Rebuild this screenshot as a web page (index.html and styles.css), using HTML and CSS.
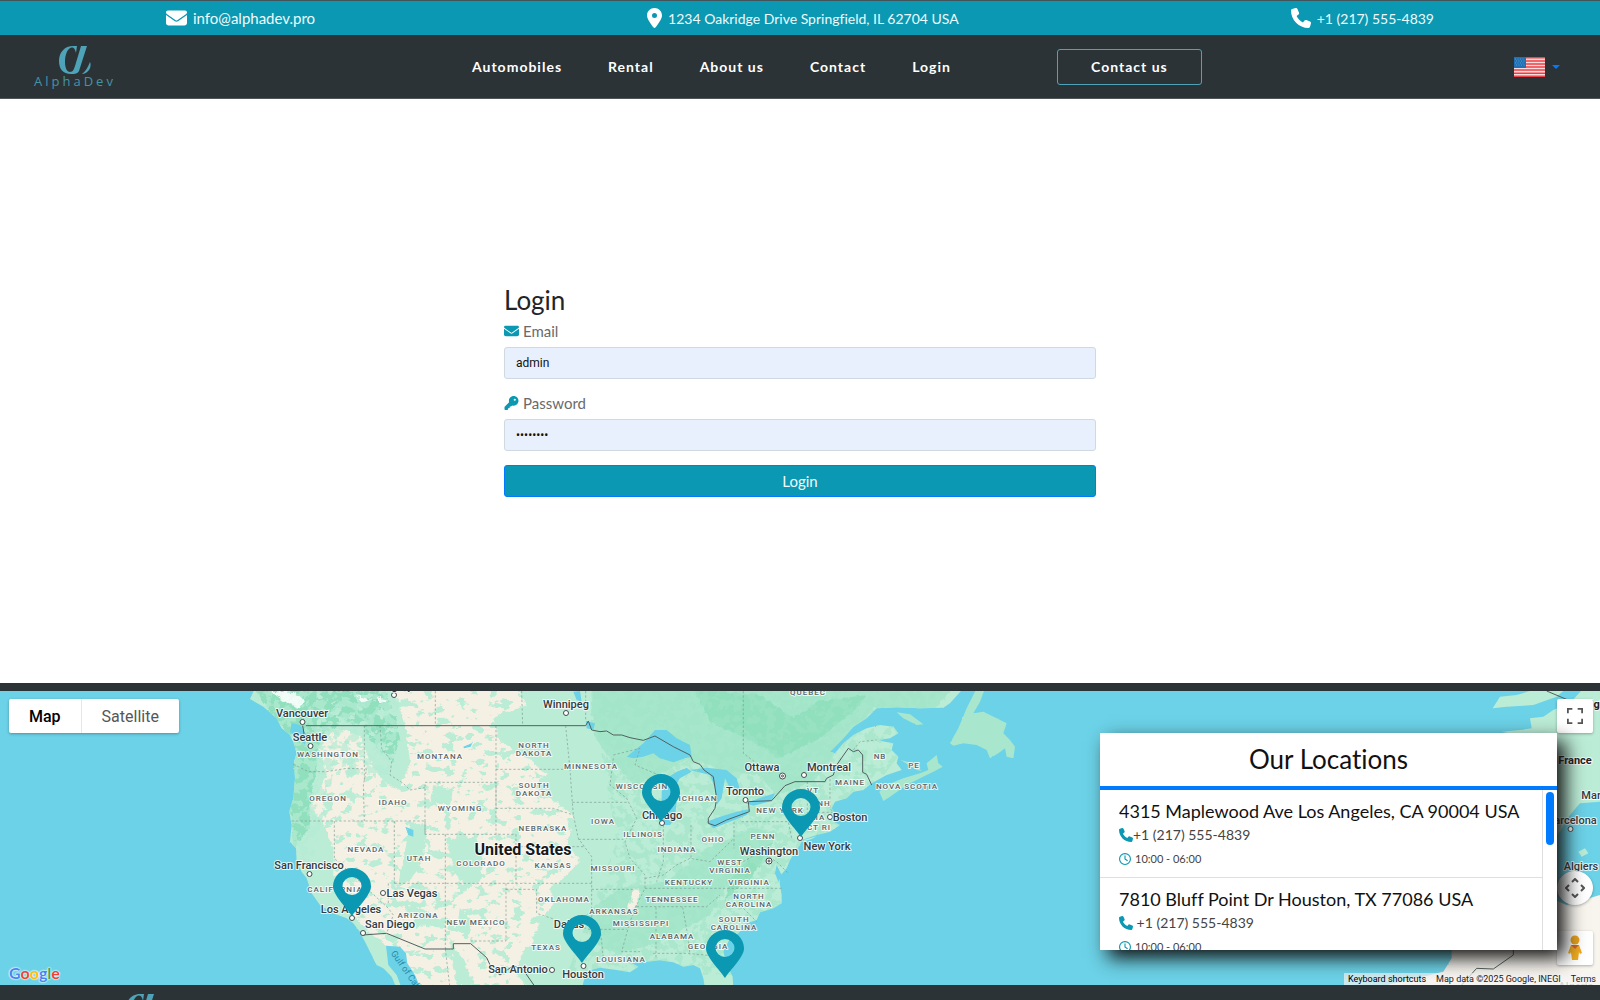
FILE: index.html
```html
<!DOCTYPE html>
<html lang="en">
<head>
  <meta charset="UTF-8">
  <meta name="viewport" content="width=device-width, initial-scale=1">
  <title>AlphaDev - Login</title>
  <link rel="stylesheet" href="styles.css">
</head>
<body>

  <!-- shared icons -->
  <svg class="defs" aria-hidden="true">
    <symbol id="i-mail" viewBox="0 0 512 512" preserveAspectRatio="none"><path d="M48 64C21.500 64 0 85.500 0 112c0 15.100 7.100 29.300 19.200 38.400L236.800 313.600c11.400 8.500 27 8.500 38.400 0L492.800 150.400c12.100-9.100 19.200-23.300 19.200-38.400c0-26.500-21.500-48-48-48H48zM0 176V384c0 35.300 28.700 64 64 64H448c35.300 0 64-28.700 64-64V176L294.400 339.200c-22.800 17.100-54 17.100-76.800 0L0 176z"/></symbol>
    <symbol id="i-phone" viewBox="0 0 512 512"><path d="M164.900 24.600c-7.700-18.600-28-28.500-47.400-23.200l-88 24C12.100 30.200 0 46 0 64C0 311.400 200.600 512 448 512c18 0 33.800-12.100 38.600-29.500l24-88c5.300-19.400-4.600-39.700-23.200-47.400l-96-40c-16.300-6.800-35.200-2.100-46.300 11.600L304.700 368C234.300 334.700 177.300 277.700 144 207.300L193.300 167c13.700-11.200 18.400-30 11.600-46.300l-40-96z"/></symbol>
    <symbol id="i-pin" viewBox="0 0 384 512"><path d="M215.700 499.200C267 435 384 279.400 384 192C384 86 298 0 192 0S0 86 0 192c0 87.400 117 243 168.300 307.200c12.300 15.300 35.100 15.300 47.400 0zM192 128a64 64 0 1 1 0 128 64 64 0 1 1 0-128z"/></symbol>
    <symbol id="i-key" viewBox="0 0 512 512"><path d="M336 352c97.200 0 176-78.800 176-176S433.200 0 336 0S160 78.800 160 176c0 18.700 2.900 36.800 8.300 53.700L7 391c-4.500 4.500-7 10.600-7 17v80c0 13.300 10.700 24 24 24h80c13.300 0 24-10.700 24-24V448h40c13.300 0 24-10.700 24-24V384h40c6.400 0 12.500-2.500 17-7l33.300-33.300c16.900 5.400 35 8.300 53.700 8.300zM376 96a40 40 0 1 1 0 80 40 40 0 1 1 0-80z"/></symbol>
    <symbol id="i-clock" viewBox="0 0 512 512"><path d="M464 256A208 208 0 1 1 48 256a208 208 0 1 1 416 0zM0 256a256 256 0 1 0 512 0A256 256 0 1 0 0 256zM232 120V256c0 8 4 15.500 10.700 20l96 64c11 7.400 25.900 4.400 33.300-6.700s4.400-25.900-6.700-33.300L280 243.200V120c0-13.300-10.700-24-24-24s-24 10.700-24 24z"/></symbol>
    <symbol id="i-alpha" viewBox="0 0 32 28"><path d="M18 0H28L20 25C19 27.500 16 28 12 28C4 28 0 23 0 15C0 6 6 0 14 0H18L17 7C16 3 15 1.500 13 1.500C9 1.500 6 8 6 16C6 22 8 26 11 26C14 26 15 23 16 20L22 0Z"/><path d="M31 16C33 20 30 28 23 28C27 25 29 21 31 16Z"/></symbol>
  </svg>

  <header>
    <div class="topbar">
      <a href="mailto:info@alphadev.pro"><svg class="mail"><use href="#i-mail"/></svg>info@alphadev.pro</a>
      <span><svg class="pin"><use href="#i-pin"/></svg>1234 Oakridge Drive Springfield, IL 62704 USA</span>
      <a href="tel:+12175554839"><svg class="phone"><use href="#i-phone"/></svg>+1 (217) 555-4839</a>
    </div>

    <div class="navbar">
      <a class="logo" href="#" aria-label="AlphaDev">
        <svg><use href="#i-alpha"/></svg>
        <span>AlphaDev</span>
      </a>
      <nav>
        <a href="#">Automobiles</a>
        <a href="#">Rental</a>
        <a href="#">About us</a>
        <a href="#">Contact</a>
        <a href="#">Login</a>
        <button type="button" class="contact-btn">Contact us</button>
      </nav>
      <button type="button" class="lang" aria-label="Language">
        <svg class="flag" viewBox="0 0 31 20">
          <path fill="#f6dcdc" d="M0 0h31v20H0z"/>
          <path stroke="#ee4045" stroke-width="1.540" d="M0 .8h31M0 3.900h31M0 7h31M0 10h31M0 13.100h31M0 16.200h31M0 19.200h31"/>
          <path fill="#1f70b5" d="M0 0h12v11H0z"/>
          <path stroke="#6aa5d2" stroke-dasharray="1 1.500" stroke-width=".8" d="M1 2h10M2 4h9M1 6h10M2 8h9"/>
        </svg>
        <svg class="caret" viewBox="0 0 8 4"><path d="M0 0h8L4 4z"/></svg>
      </button>
    </div>
  </header>

  <main>
    <form class="login">
      <h1>Login</h1>
      <label for="email"><svg class="small-mail"><use href="#i-mail"/></svg>Email</label>
      <input type="text" id="email" value="admin">
      <label for="password"><svg><use href="#i-key"/></svg>Password</label>
      <input type="password" id="password" value="password">
      <button type="submit">Login</button>
    </form>
  </main>

  <section class="map">
    <svg class="map-canvas" viewBox="0 0 1600 294" preserveAspectRatio="xMidYMid slice">
      <defs>
        <filter id="rough" x="0" y="0" width="100%" height="100%">
          <feTurbulence type="fractalNoise" baseFrequency=".06" numOctaves="3" seed="4"/>
          <feDisplacementMap in="SourceGraphic" scale="16" xChannelSelector="R" yChannelSelector="G"/>
        </filter>
        <filter id="coast" x="0" y="0" width="100%" height="100%">
          <feTurbulence type="fractalNoise" baseFrequency=".12" numOctaves="2" seed="8"/>
          <feDisplacementMap in="SourceGraphic" scale="5" xChannelSelector="R" yChannelSelector="G"/>
        </filter>
        <filter id="patches" x="0" y="0" width="100%" height="100%">
          <feTurbulence type="fractalNoise" baseFrequency=".03 .04" numOctaves="4" seed="11"/>
          <feColorMatrix values="0 0 0 0 0  0 0 0 0 0  0 0 0 0 0  16 0 0 0 -9.200"/>
          <feComposite in="SourceGraphic" operator="in"/>
        </filter>
        <filter id="patches2" x="0" y="0" width="100%" height="100%">
          <feTurbulence type="fractalNoise" baseFrequency=".04" numOctaves="4" seed="31"/>
          <feColorMatrix values="0 0 0 0 0  0 0 0 0 0  0 0 0 0 0  0 14 0 0 -6.800"/>
          <feComposite in="SourceGraphic" operator="in"/>
        </filter>
        <clipPath id="land-clip"><use href="#america"/></clipPath>
        <path id="america" d="M765 40L750 72 790 95 830 130 845 160 870 180 880 200 890 235 882 260 885 310 880 370 868 410 875 450 870 500 888 520 890 560 905 590 920 610 935 655 960 690 1000 715 1040 730 1060 745 1080 770 1095 800 1110 830 1130 870 1150 880 1175 905 1190 940H1745L1755 905 1770 885 1800 878 1850 885 1890 892 1915 875 1890 862 1940 860 1980 856 2020 862 2050 875 2080 870 2100 880 2110 910 2115 940H2200L2198 905 2180 870 2170 830 2190 790 2215 775 2240 745 2270 735 2280 712 2320 700 2345 685V660L2340 630 2338 605 2360 580 2370 555 2385 530 2400 510 2405 495 2450 480 2490 470 2520 450 2500 440 2510 425 2495 400 2505 380 2540 370 2560 350 2590 345 2615 325 2660 300 2705 285 2690 265 2695 245 2675 225 2680 205 2655 200 2635 195 2670 190 2695 175 2680 155 2640 150 2600 160 2560 180 2530 205 2505 235 2490 230 2530 190 2560 155 2600 130 2630 100 2690 97 2760 100 2830 98 2850 85 2890 40Z"/>
        <symbol id="marker" viewBox="0 0 38 48" width="38" height="48"><path fill="#0b98b2" fill-rule="evenodd" d="M19 48C14 40 0 27 0 18.500A19 18.500 0 0 1 38 18.500C38 27 24 40 19 48ZM19 9A9.500 9 0 0 0 19 27A9.500 9 0 0 0 19 9Z"/></symbol>
      </defs>

      <rect class="water" width="1600" height="294"/>

      <g transform="translate(0 -16) scale(.33333)">
        <g filter="url(#coast)">
          <use href="#america" fill="#bbecd6"/>
          <path fill="#a8e7cd" d="M2638 350L2660 330 2710 310 2760 295 2785 285 2780 265 2810 240 2815 265 2828 275 2800 290 2760 310 2720 330 2670 365 2650 378ZM2702 255L2750 285 2765 288 2740 265ZM2850 205L2875 160 2900 100 2930 40H2955L2940 80 2920 115 2950 110 2990 130 3020 145 3010 175 3030 195 3045 215 3040 250 3020 245 3015 220 2995 235 2970 250 2960 225 2930 210 2890 205 2860 212ZM2690 112L2730 118 2770 148 2750 150 2710 130Z"/>
          <path fill="#bbecd6" d="M2400 498L2450 484 2435 492 2402 502ZM4478 100L4500 65 4550 60 4590 48H4690L4670 65 4600 90 4520 95ZM4505 170L4560 165 4595 160 4590 130 4630 125 4660 105 4710 85 4750 40H4800V380L4740 385 4710 420 4680 470 4650 500V200ZM4735 530L4755 520 4765 535 4745 545Z"/>
          <path fill="#f8f5ef" d="M4120 940L4330 890 4355 850V825L4650 670 4700 690 4800 660V940Z"/>
        </g>
        <g clip-path="url(#land-clip)">
          <g filter="url(#rough)">
            <path fill="#f5f0e4" d="M1180 40H1550L1580 90 1480 130 1500 200 1600 260 1640 300 1600 330 1690 400 1730 430 1700 500 1740 560 1690 610 1650 640 1660 690 1620 740 1600 800 1560 850 1550 900 1600 950H1230L1190 860 1150 800 1090 760 1060 720 1040 660 1000 610 1000 520 970 440 930 400 980 300 960 210 1010 160 1080 180 1110 260 1160 330 1200 340 1230 260 1220 170Z"/>
            <path fill="#90dfbd" d="M760 40H1150L1180 110 1200 190 1180 260 1130 220 1080 150 1030 140 960 180 950 280 930 400 930 460 880 520 870 400 885 200 840 150Z"/>
            <path fill="#bbecd6" d="M1340 500L1380 480 1430 490 1450 560 1440 620 1400 640 1370 600ZM1230 440L1280 450 1275 520 1240 610 1190 640 1210 560ZM1210 690L1260 700 1330 740 1340 760 1250 750ZM1300 330L1360 340 1350 390 1290 380ZM1380 700L1420 740 1400 790 1370 760ZM1350 800L1390 850 1420 930H1370ZM930 480L990 540 1010 590 950 560 930 520ZM930 600L990 660 1060 720 1040 730 960 690Z"/>
            <path fill="#a6e6cb" d="M1780 40H2860L2800 110 2620 100 2500 240 2440 320 2330 360 2280 300 2180 290 2060 250 1980 300 1900 330 1820 240 1770 160ZM2120 520L2250 460 2330 470 2300 560 2180 640 2130 720 1980 800 1850 840 1780 800 1750 720 1860 640 2000 620Z"/>
            <path fill="#90dfbd" d="M2080 40L2280 60 2380 130 2450 80 2600 60 2560 110 2460 190 2340 250 2240 190 2130 140ZM2200 600L2260 540 2320 500 2260 600 2170 680Z"/>
            <path fill="#f5f0e4" d="M1900 640L1920 640 1915 680 1890 720 1880 700Z"/>
          </g>
          <path filter="url(#patches)" fill="#bbecd6" d="M950 40H1780V940H1000L950 600Z"/>
          <path filter="url(#patches2)" fill="#9fe4c7" opacity=".55" d="M1770 40H2850L2500 500 2200 900H1700L1850 500Z"/>
          <path filter="url(#patches2)" fill="#b4ebd4" opacity=".7" d="M750 40H1200L1180 300 1000 300 900 700 850 500Z"/>
          <path fill="#fff" opacity=".85" filter="url(#rough)" d="M810 48L880 50 915 75 900 100 860 85ZM1070 60L1110 75 1090 82ZM1130 65L1165 75 1140 85Z"/>
        </g>
        <g class="water" filter="url(#coast)">
          <path d="M1158 812L1200 815 1218 835 1222 865 1245 900 1262 940H1205L1190 900 1165 870ZM875 145L900 150 920 180 915 210 895 190 870 172ZM1216 455L1240 465 1240 485 1225 480Z"/>
          <path d="M1880 245L1930 205 1965 165 2000 165 2030 190 2070 210 2075 245 2055 250 2020 262 1980 250 1960 235 1930 245 1900 250Z"/>
          <path d="M1985 350L2000 310 2030 290 2060 278 2075 290 2040 310 2022 340 2030 380 2025 430 2010 450 1990 450 1985 400ZM2070 285L2120 278 2180 285 2210 310 2220 345 2190 340 2175 310 2165 370 2150 390 2145 340 2130 300Z"/>
          <path d="M2120 440L2160 425 2210 410 2250 402 2240 420 2190 440 2140 460ZM2235 385L2290 365 2325 355 2315 378 2260 392ZM1720 50L1740 48 1745 80 1730 75ZM1757 138L1785 145 1780 165 1760 160ZM1390 215L1415 205 1420 198 1412 215 1392 220Z"/>
          <path d="M2330 570L2345 600 2335 620 2325 595Z"/>
        </g>
        <path class="state" d="M1093 152V320M880 268L925 290 980 290 1040 280 1100 282 1090 330 1093 438M875 438H1275M1003 438V550L1165 700 1180 720 1160 775M1183 438V625M1165 625V690M1183 625H1775M1336 478V822M1275 438V478H1548M1275 478V322H1488V478M1140 152L1145 220 1175 260 1170 300 1210 325 1230 345 1275 338M1488 152V400M1488 283H1715M1488 400H1660L1720 420M1548 478V625M1548 515H1750M1697 152L1710 283 1717 382 1720 420 1735 490 1775 545V770M1717 382H1880M1735 493H1870M1518 625V798H1412M1518 643H1610V715L1670 735 1775 765M1775 643H1900M1800 763H1880M1800 763L1805 800 1810 850M1840 250L1830 330 1880 370 1910 430 1890 470 1875 500 1890 550 1935 600V640L1910 690 1890 740 1865 830H1920M1990 450V560L1970 620M2073 450V550M1935 610L1990 600 2030 570 2070 550 2130 560 2202 490M1935 640H2345M1910 695H2120L2160 660M1968 697V850M2048 697L2065 790 2070 840M1960 835H2065L2160 845M2225 440H2365L2375 490M2202 440V520M1306 48V152M1565 48L1568 152M1757 48V138M2230 48V235L2310 295M1840 240L1920 220 1905 270 2000 310M2422 320V440M2490 312V400L2500 412H2422M2180 690L2230 700 2270 740M2560 225L2580 200 2630 195M2230 560L2280 530 2330 560 2365 595M1336 822L1350 940M1000 48L1050 48"/>
        <path class="border" d="M918 152H1757L1765 138 1775 165 1800 170 1820 168 1840 180 1865 180 1890 188 1930 196 1965 183 2020 215 2070 240 2080 260 2100 268 2112 285 2140 305 2150 370 2145 400 2125 430V445L2145 452 2180 435 2248 410 2245 380 2315 377 2355 332 2385 320H2475L2480 310 2500 300 2510 270 2545 220 2560 230 2575 225 2588 240V292L2600 298 2615 330M908 152L912 175 900 190M1088 780L1160 775 1275 822H1360V806H1412L1460 848 1475 880 1500 900 1540 872 1570 885 1605 935M4385 930L4430 880 4480 882 4540 840V825M4640 48L4740 90"/>
      </g>

      <g class="cities">
        <g class="dots">
          <circle cx="302.500" cy="31" r="2.500"/><circle cx="310.500" cy="55" r="2.500"/><circle cx="309.500" cy="183" r="2.500"/><circle cx="352" cy="227" r="2.500"/><circle cx="363" cy="242" r="2.500"/><circle cx="383" cy="202" r="2.500"/><circle cx="566" cy="22" r="2.500"/><circle cx="552" cy="279" r="2.500"/><circle cx="583.500" cy="275" r="2.500"/><circle cx="662" cy="132" r="2.500"/><circle cx="745.500" cy="109" r="2.500"/><circle cx="804" cy="84" r="2.500"/><circle cx="830" cy="126" r="2.500"/><circle cx="800" cy="147" r="2.500"/><circle cx="394" cy="4" r="2.500"/><circle cx="1570.500" cy="138" r="2.500"/>
          <circle cx="782.500" cy="85" r="3"/><circle cx="782.500" cy="85" r="1"/><circle cx="769" cy="170" r="3"/><circle cx="769" cy="170" r="1"/>
        </g>
        <text x="302" y="26">Vancouver</text>
        <text x="310" y="50">Seattle</text>
        <text x="309" y="178">San Francisco</text>
        <text x="351" y="222">Los Angeles</text>
        <text x="390" y="237">San Diego</text>
        <text x="412" y="206">Las Vegas</text>
        <text x="566" y="17">Winnipeg</text>
        <text x="518" y="282">San Antonio</text>
        <text x="583" y="287">Houston</text>
        <text x="569" y="237">Dallas</text>
        <text x="662" y="128">Chicago</text>
        <text x="745" y="104">Toronto</text>
        <text x="762" y="80">Ottawa</text>
        <text x="829" y="80">Montreal</text>
        <text x="850" y="130">Boston</text>
        <text x="827" y="159">New York</text>
        <text x="769" y="164">Washington</text>
        <text x="394" y="-1">Calgary</text>
        <text x="1572" y="133">Barcelona</text>
        <text x="1604" y="108">Marseille</text>
        <text x="1581" y="179">Algiers</text>
      </g>
      <g class="states">
        <text x="328" y="66">WASHINGTON</text>
        <text x="328" y="110">OREGON</text>
        <text x="393" y="114">IDAHO</text>
        <text x="440" y="68">MONTANA</text>
        <text x="460" y="120">WYOMING</text>
        <text x="366" y="161">NEVADA</text>
        <text x="419" y="170">UTAH</text>
        <text x="481" y="175">COLORADO</text>
        <text x="335" y="201">CALIFORNIA</text>
        <text x="418" y="227">ARIZONA</text>
        <text x="476" y="234">NEW MEXICO</text>
        <text x="534" y="57">NORTH</text><text x="534" y="65">DAKOTA</text>
        <text x="534" y="97">SOUTH</text><text x="534" y="105">DAKOTA</text>
        <text x="543" y="140">NEBRASKA</text>
        <text x="553" y="177">KANSAS</text>
        <text x="564" y="211">OKLAHOMA</text>
        <text x="546" y="259">TEXAS</text>
        <text x="591" y="78">MINNESOTA</text>
        <text x="642" y="98">WISCONSIN</text>
        <text x="603" y="133">IOWA</text>
        <text x="643" y="146">ILLINOIS</text>
        <text x="677" y="161">INDIANA</text>
        <text x="713" y="151">OHIO</text>
        <text x="694" y="110">MICHIGAN</text>
        <text x="613" y="180">MISSOURI</text>
        <text x="689" y="194">KENTUCKY</text>
        <text x="672" y="211">TENNESSEE</text>
        <text x="614" y="223">ARKANSAS</text>
        <text x="641" y="235">MISSISSIPPI</text>
        <text x="672" y="248">ALABAMA</text>
        <text x="708" y="258">GEORGIA</text>
        <text x="621" y="271">LOUISIANA</text>
        <text x="730" y="174">WEST</text><text x="730" y="182">VIRGINIA</text>
        <text x="749" y="194">VIRGINIA</text>
        <text x="749" y="208">NORTH</text><text x="749" y="216">CAROLINA</text>
        <text x="734" y="231">SOUTH</text><text x="734" y="239">CAROLINA</text>
        <text x="763" y="148">PENN</text>
        <text x="780" y="122">NEW YORK</text>
        <text x="813" y="102">VT</text>
        <text x="824" y="115">NH</text>
        <text x="818" y="129">MA</text>
        <text x="819" y="139">CT RI</text>
        <text x="850" y="94">MAINE</text>
        <text x="880" y="68">NB</text>
        <text x="914" y="77">PE</text>
        <text x="907" y="98">NOVA SCOTIA</text>
        <text x="808" y="4">QUEBEC</text>
      </g>
      <text class="gulf" transform="translate(410 290) rotate(55)">Gulf of California</text>
      <text class="country" x="523" y="164">United States</text>
      <text class="country-small" x="1575" y="73">France</text>
      <text class="country-small" x="1598" y="17">Belgium</text>
      <text class="country-small faded" x="1576" y="299">Algeria</text>

      <use href="#marker" x="333" y="177"/>
      <use href="#marker" x="642" y="83"/>
      <use href="#marker" x="563" y="224"/>
      <use href="#marker" x="706" y="239"/>
      <use href="#marker" x="782" y="98"/>
    </svg>

    <div class="map-type">
      <button type="button" class="active">Map</button>
      <button type="button">Satellite</button>
    </div>
    <button type="button" class="map-btn fullscreen" aria-label="Toggle fullscreen view">
      <svg viewBox="0 0 18 18"><path d="M1 6V1h5M12 1h5v5M17 12v5h-5M6 17H1v-5"/></svg>
    </button>
    <button type="button" class="map-btn camera" aria-label="Map camera controls">
      <svg viewBox="0 0 20 20"><path d="M7 4l3-3 3 3M7 16l3 3 3-3M4 7l-3 3 3 3M16 7l3 3-3 3"/></svg>
    </button>
    <button type="button" class="map-btn pegman" aria-label="Street View">
      <svg viewBox="0 0 16 26"><circle cx="8" cy="5" r="4.500" fill="#e8a21c"/><path fill="#f0ac1f" d="M4 10h8l3 8-2 1-1-2-1 8H5L4 17l-1 2-2-1z"/><path fill="#d4632b" d="M4 10h8l-4 4z"/></svg>
    </button>
    <div class="google" aria-label="Google"><i>G</i><i>o</i><i>o</i><i>g</i><i>l</i><i>e</i></div>
    <div class="map-terms">
      <button type="button">Keyboard shortcuts</button>
      <span>Map data ©2025 Google, INEGI</span>
      <a href="#">Terms</a>
    </div>

    <div class="locations">
      <h2>Our Locations</h2>
      <div class="list">
        <ul>
          <li>
            <h3>4315 Maplewood Ave Los Angeles, CA 90004 USA</h3>
            <p><svg><use href="#i-phone"/></svg>+1 (217) 555-4839</p>
            <small><svg><use href="#i-clock"/></svg>10:00 - 06:00</small>
          </li>
          <li>
            <h3>7810 Bluff Point Dr Houston, TX 77086 USA</h3>
            <p><svg><use href="#i-phone"/></svg>&nbsp;+1 (217) 555-4839</p>
            <small><svg><use href="#i-clock"/></svg>10:00 - 06:00</small>
          </li>
        </ul>
        <div class="scroll"></div>
      </div>
    </div>
  </section>

  <footer>
    <svg><use href="#i-alpha"/></svg>
  </footer>

</body>
</html>
```
FILE: styles.css
```css
* {
  box-sizing: border-box;
}
body {
  margin: 0;
  height: 100vh;
  overflow: hidden;
  display: flex;
  flex-direction: column;
  font-family: Lato, sans-serif;
  font-variant-ligatures: none;
  color: #212529;
  background: #fff;
}
a {
  color: inherit;
  text-decoration: none;
}
button {
  font-family: inherit;
  cursor: pointer;
}
.defs {
  position: absolute;
  width: 0;
  height: 0;
}

/* header */
.topbar {
  display: flex;
  justify-content: space-around;
  align-items: center;
  height: 35px;
  background: #0b98b2;
  border-top: 1px solid #40545a;
  color: #eefafc;
  font-size: 14px;
}
.topbar a,
.topbar span {
  display: flex;
  align-items: center;
  gap: 6px;
}
.topbar a:first-child {
  font-size: 15px;
}
.topbar svg {
  fill: #fff;
  width: 20px;
  height: 20px;
}
.topbar .mail {
  width: 21px;
}
.topbar .pin {
  width: 15px;
}
.navbar {
  display: flex;
  justify-content: space-between;
  align-items: center;
  height: 64px;
  padding: 0 40px 0 34px;
  background: #2b3336;
  border-bottom: 1px solid #50575a;
}
.logo {
  display: flex;
  flex-direction: column;
  align-items: center;
  color: #4494a8;
  font-family: "Open Sans", sans-serif;
  font-size: 13px;
  line-height: 14px;
  letter-spacing: 3px;
}
.logo svg {
  width: 32px;
  height: 28px;
  fill: #4fa3b8;
}
nav {
  display: flex;
  align-items: center;
  gap: 46px;
  padding-left: 44px;
  color: #fff;
  font-size: 14px;
  font-weight: bold;
  letter-spacing: 1px;
}
.contact-btn {
  width: 145px;
  height: 36px;
  margin-left: 60px;
  background: none;
  border: 1px solid #4fa3b8;
  border-radius: 3px;
  color: #fff;
  font-size: 14px;
  font-weight: bold;
  letter-spacing: 1px;
}
.lang {
  display: flex;
  align-items: center;
  gap: 7px;
  padding: 0;
  background: none;
  border: 0;
}
.flag {
  width: 31px;
  height: 20px;
}
.caret {
  width: 8px;
  height: 4px;
  fill: #007bff;
}

/* login form */
main {
  flex: 1;
  display: flex;
  align-items: center;
  justify-content: center;
}
.login {
  width: 37%;
  display: flex;
  flex-direction: column;
}
.login h1 {
  margin: 0 0 4px;
  font-size: 26px;
  line-height: 30px;
  font-weight: normal;
}
.login label {
  display: flex;
  align-items: center;
  gap: 4px;
  margin-bottom: 4px;
  font-size: 15px;
  line-height: 24px;
  color: #6a6a6a;
}
.login label svg {
  width: 15px;
  height: 14px;
  fill: #0b98b2;
}
.login .small-mail {
  height: 14px;
}
.login input {
  height: 32px;
  margin-bottom: 12px;
  padding: 0 11px;
  background: #e8f0fe;
  border: 1px solid #ced9e2;
  border-radius: 3px;
  font-family: Roboto, sans-serif;
  font-size: 12px;
  color: #111;
}
.login button {
  height: 32px;
  margin-top: 2px;
  background: #0b98b2;
  border: 1px solid #007bff;
  border-radius: 3px;
  color: #eefafc;
  font-size: 15px;
}

/* map */
.map {
  position: relative;
  border-top: 8px solid #2b3336;
  font-family: Roboto, sans-serif;
}
.map-canvas {
  display: block;
  width: 100%;
  height: 294px;
}
.water {
  fill: #6cd2e7;
}
.state {
  fill: none;
  stroke: #7f9b93;
  stroke-width: 2px;
  stroke-dasharray: 7 6;
}
.border {
  fill: none;
  stroke: #50605f;
  stroke-width: 3px;
}
.dots {
  fill: #fff;
  stroke: #454b4e;
}
.map-canvas text {
  paint-order: stroke;
  stroke: #fff;
  stroke-width: 2px;
  stroke-opacity: .8;
  stroke-linejoin: round;
  text-anchor: middle;
}
.cities text {
  font-size: 11px;
  font-weight: 500;
  fill: #333b40;
}
.states text {
  font-size: 8px;
  font-weight: 500;
  letter-spacing: 1px;
  fill: #5a6568;
}
.map-canvas .gulf {
  font-size: 9px;
  fill: #2b8ca8;
  stroke: none;
}
.country {
  font-size: 16px;
  font-weight: bold;
  fill: #16191b;
}
.country-small {
  font-size: 11px;
  font-weight: bold;
  fill: #222;
}
.faded {
  opacity: .5;
}
.map-type {
  position: absolute;
  top: 8px;
  left: 9px;
  display: flex;
  background: #fff;
  border-radius: 2px;
  box-shadow: 0 1px 3px rgba(0, 0, 0, .3);
}
.map-type button {
  height: 34px;
  padding: 0 20px;
  background: none;
  border: 0;
  color: #565656;
  font-size: 16px;
}
.map-type .active {
  border-right: 1px solid #e6e6e6;
  color: #000;
  font-weight: 500;
}
.map-btn {
  position: absolute;
  right: 7px;
  display: grid;
  place-items: center;
  width: 36px;
  height: 34px;
  padding: 0;
  background: #fff;
  border: 0;
  border-radius: 2px;
  box-shadow: 0 1px 3px rgba(0, 0, 0, .3);
}
.map-btn svg {
  width: 16px;
  height: 16px;
  fill: none;
  stroke: #555;
  stroke-width: 2px;
}
.fullscreen {
  top: 8px;
}
.camera {
  top: 180px;
  border-radius: 50%;
}
.map-btn.camera svg {
  width: 20px;
  height: 20px;
}
.pegman {
  top: 240px;
}
.map-btn.pegman svg {
  width: 16px;
  height: 26px;
  stroke: none;
}
.google {
  position: absolute;
  left: 9px;
  bottom: 2px;
  font-family: Lato, sans-serif;
  font-size: 16px;
  line-height: 20px;
  font-weight: bold;
  color: #4285f4;
  text-shadow: 0 0 1px #fff, 0 0 2px #fff, 0 0 2px #fff;
}
.google i {
  font-style: normal;
}
.google i:nth-child(2),
.google i:nth-child(6) {
  color: #ea4335;
}
.google i:nth-child(3) {
  color: #fbbc05;
}
.google i:nth-child(5) {
  color: #34a853;
}
.map-terms {
  position: absolute;
  right: 0;
  bottom: 0;
  display: flex;
  gap: 10px;
  padding: 0 4px;
  background: rgba(245, 245, 245, .7);
  font-size: 9px;
  line-height: 12px;
  color: #222;
}
.map-terms button {
  padding: 0;
  background: none;
  border: 0;
  font-size: 9px;
}

/* locations panel */
.locations {
  position: absolute;
  top: 42px;
  right: 43px;
  width: 457px;
  height: 217px;
  display: flex;
  flex-direction: column;
  background: #fff;
  box-shadow: 8px 8px 18px #111;
  font-family: Lato, sans-serif;
}
.locations h2 {
  margin: 0;
  font-size: 26px;
  line-height: 53px;
  font-weight: normal;
  text-align: center;
  color: #111;
  border-bottom: 4px solid #007bff;
}
.list {
  flex: 1;
  display: flex;
  min-height: 0;
  overflow: hidden;
}
.list ul {
  flex: 1;
  margin: 0;
  padding: 0;
  list-style: none;
}
.list li {
  height: 88px;
  padding: 8px 0 0 19px;
  border: solid #dfdfdf;
  border-width: 0 1px 1px 0;
}
.list h3 {
  margin: 0;
  font-size: 18px;
  line-height: 26px;
  font-weight: normal;
  color: #111;
}
.list p,
.list small {
  display: flex;
  align-items: center;
  margin: 0;
  font-size: 14px;
  line-height: 22px;
  color: #444;
}
.list small {
  gap: 4px;
  font-size: 11px;
  line-height: 26px;
}
.list svg {
  width: 14px;
  height: 14px;
  fill: #0b98b2;
}
.list small svg {
  width: 12px;
  height: 12px;
}
.scroll {
  width: 8px;
  height: 53px;
  margin: 2px 3px;
  background: #007bff;
  border-radius: 4px;
}

footer {
  height: 15px;
  padding: 9px 126px 0;
  overflow: hidden;
  background: #2b3336;
}
footer svg {
  width: 32px;
  height: 28px;
  fill: #4fa3b8;
}
```
